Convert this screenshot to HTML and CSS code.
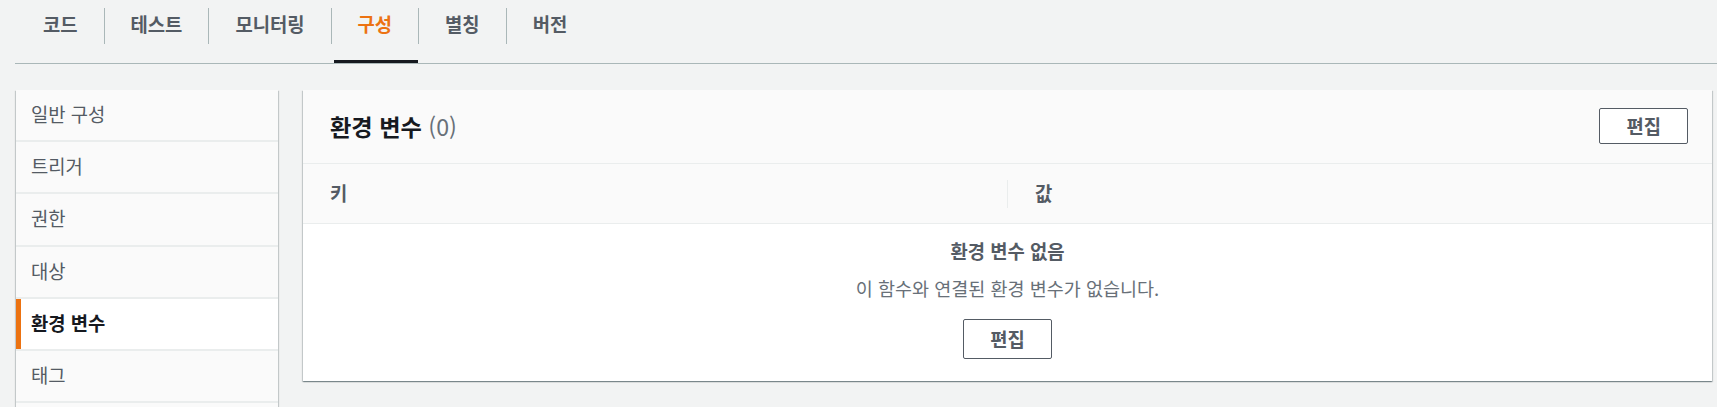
FILE: index.html
```html
<!DOCTYPE html>
<html lang="ko">
<head>
<meta charset="utf-8">
<title>구성 - 환경 변수</title>
<link rel="stylesheet" href="styles.css">
</head>
<body>
<nav class="tabs">
  <a class="tab"><span class="tab-label">코드</span></a>
  <a class="tab"><span class="tab-label">테스트</span></a>
  <a class="tab"><span class="tab-label">모니터링</span></a>
  <a class="tab active"><span class="tab-label">구성</span></a>
  <a class="tab"><span class="tab-label">별칭</span></a>
  <a class="tab"><span class="tab-label">버전</span></a>
</nav>
<div class="content">
  <ul class="side-nav">
    <li class="side-item">일반 구성</li>
    <li class="side-item">트리거</li>
    <li class="side-item">권한</li>
    <li class="side-item">대상</li>
    <li class="side-item active">환경 변수</li>
    <li class="side-item">태그</li>
    <li class="side-item side-rest"></li>
  </ul>
  <section class="panel">
    <header class="panel-header">
      <h2 class="panel-title">환경 변수 <span class="count">(0)</span></h2>
      <button class="btn">편집</button>
    </header>
    <div class="table-head">
      <div class="col-head">키</div>
      <div class="col-divider"></div>
      <div class="col-head">값</div>
    </div>
    <div class="empty">
      <div class="empty-title">환경 변수 없음</div>
      <div class="empty-desc">이 함수와 연결된 환경 변수가 없습니다.</div>
      <button class="btn btn-tall">편집</button>
    </div>
  </section>
</div>
</body>
</html>
```

FILE: styles.css
```css
html, body {
  margin: 0;
  padding: 0;
  overflow: hidden;
}
body {
  background: #f2f3f3;
  font-family: "Noto Sans CJK KR", "Noto Sans", sans-serif;
  font-size: 18.8px;
  color: #545b64;
}

/* Tabs */
.tabs {
  display: flex;
  margin-left: 15px;
  padding-left: 2px;
  border-bottom: 1px solid #aab7b8;
}
.tab {
  position: relative;
  box-sizing: border-box;
  height: 63px;
  padding-top: 8px;
  font-weight: 700;
  color: #545b64;
  cursor: pointer;
}
.tab-label {
  display: block;
  padding: 0 26px 5px;
  line-height: 31px;
  border-right: 1px solid #aab7b8;
}
.tab:last-child .tab-label {
  border-right: none;
}
.tab.active {
  color: #ec7211;
}
.tab.active::after {
  content: "";
  position: absolute;
  left: 2px;
  right: 1px;
  bottom: 0;
  height: 3px;
  background: #16191f;
}

/* Layout */
.content {
  display: flex;
  align-items: flex-start;
  gap: 25px;
  padding: 26px 5px 0 16px;
}

/* Side navigation */
.side-nav {
  list-style: none;
  margin: 0;
  padding: 0;
  width: 262px;
  flex: none;
  background: #eaeded;
  box-shadow: 0 1px 1px 0 rgba(0, 28, 36, 0.3), 1px 1px 1px 0 rgba(0, 28, 36, 0.15), -1px 1px 1px 0 rgba(0, 28, 36, 0.15);
}
.side-item {
  box-sizing: border-box;
  height: 50.2px;
  margin-bottom: 2px;
  padding-left: 15px;
  padding-bottom: 3px;
  display: flex;
  align-items: center;
  background: #fafafa;
  color: #545b64;
}
.side-item.active {
  background: #ffffff;
  color: #16191f;
  font-weight: 700;
  box-shadow: inset 5px 0 0 #ec7211;
}

/* Panel */
.panel {
  flex: 1;
  background: #ffffff;
  box-shadow: 0 1px 1px 0 rgba(0, 28, 36, 0.3), 1px 1px 1px 0 rgba(0, 28, 36, 0.15), -1px 1px 1px 0 rgba(0, 28, 36, 0.15);
}
.panel-header {
  display: flex;
  align-items: center;
  justify-content: space-between;
  padding: 18px 24px 19px 27px;
  background: #fafafa;
  border-bottom: 1px solid #eaeded;
}
.panel-title {
  margin: 0;
  font-size: 23.2px;
  font-weight: 700;
  color: #16191f;
  line-height: 30px;
}
.count {
  font-weight: 400;
  color: #687078;
}

.btn {
  box-sizing: border-box;
  height: 36px;
  padding: 0 26px;
  border: 1px solid #545b64;
  border-radius: 2px;
  background: #ffffff;
  font-family: inherit;
  font-size: 18.8px;
  font-weight: 700;
  color: #545b64;
  line-height: 1;
  cursor: pointer;
}
.btn-tall {
  height: 40px;
}

.table-head {
  display: flex;
  align-items: center;
  height: 59px;
  background: #fafafa;
  border-bottom: 1px solid #eaeded;
}
.col-head {
  flex: 1;
  padding-left: 27px;
  padding-bottom: 2px;
  font-weight: 700;
  color: #545b64;
}
.col-divider {
  width: 1px;
  height: 28px;
  background: #eaeded;
}

.empty {
  display: flex;
  flex-direction: column;
  align-items: center;
  padding: 13px 0 22px;
  line-height: 27px;
}
.empty-title {
  font-weight: 700;
  color: #545b64;
}
.empty-desc {
  margin-top: 11px;
  font-size: 18.5px;
  color: #687078;
}
.empty .btn {
  margin-top: 17px;
}
```
